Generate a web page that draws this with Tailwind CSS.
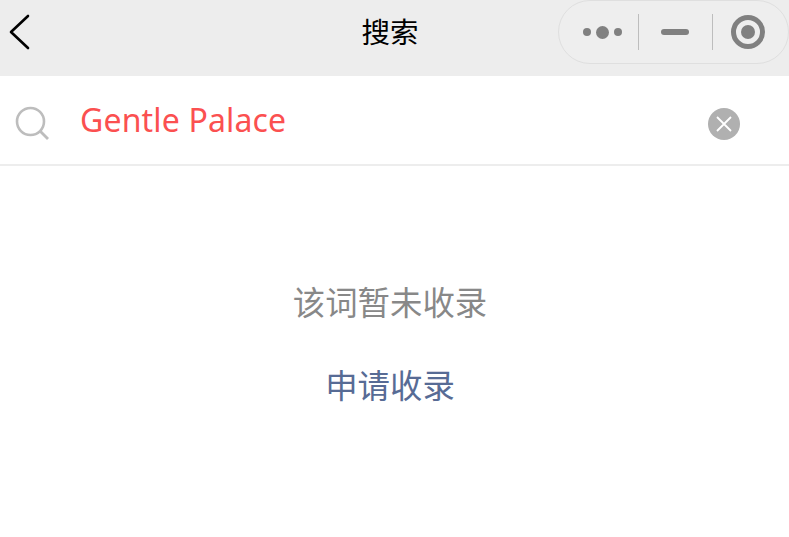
<!DOCTYPE html>
<html lang="zh-CN">
<head>
  <meta charset="UTF-8">
  <title>搜索</title>
  <script src="https://cdn.jsdelivr.net/npm/@tailwindcss/browser@4"></script>
</head>
<body class="h-[537px] overflow-hidden bg-white font-['Noto_Sans','Noto_Sans_CJK_SC',sans-serif]">

  <!-- nav bar -->
  <header class="relative flex h-[76px] items-start justify-between bg-[#ededed]">
    <svg class="ml-[9px] mt-[14px]" width="22" height="36" viewBox="0 0 22 36" fill="none">
      <path d="M19 2 L2 18 L19 34" stroke="#000" stroke-width="2.6" stroke-linecap="round" stroke-linejoin="round"/>
    </svg>
    <h1 class="absolute left-[361.5px] top-[12px] text-[28.5px] leading-[40px] font-normal text-black">搜索</h1>
    <div class="flex h-[64px] w-[231px] items-center rounded-full border border-[#dfdfdf] bg-[#eeeeee]">
      <div class="flex w-[79px] items-center justify-end gap-[5px] pr-[16px]">
        <span class="size-2 rounded-full bg-[#808080]"></span>
        <span class="size-[13px] rounded-full bg-[#808080]"></span>
        <span class="size-2 rounded-full bg-[#808080]"></span>
      </div>
      <div class="h-[36px] w-px bg-[#bdbdbd]"></div>
      <div class="flex w-[73px] items-center justify-center pr-[2px]">
        <span class="h-[6px] w-[28px] rounded-full bg-[#808080]"></span>
      </div>
      <div class="h-[36px] w-px bg-[#bdbdbd]"></div>
      <div class="flex flex-1 items-center pl-[18px]">
        <span class="mb-[1px] flex size-[34px] items-center justify-center rounded-full border-[5px] border-[#808080]">
          <span class="size-[14px] rounded-full bg-[#808080]"></span>
        </span>
      </div>
    </div>
  </header>

  <!-- search row -->
  <div class="flex h-[90px] items-center border-b-2 border-[#ededed]">
    <svg class="ml-[15px] mt-2" width="36" height="36" viewBox="0 0 36 36" fill="none">
      <circle cx="15.5" cy="15.5" r="13.5" stroke="#bdbdbd" stroke-width="2.6"/>
      <path d="M25.5 25.5 L33 33" stroke="#bdbdbd" stroke-width="2.8"/>
    </svg>
    <span class="ml-[29px] text-[32px] leading-[44px] tracking-[0.16px] text-[#fb5050]">Gentle Palace</span>
    <span class="ml-auto mr-[49px] mt-2 flex size-8 items-center justify-center rounded-full bg-[#b0b0b0]">
      <svg width="18" height="18" viewBox="0 0 18 18" fill="none">
        <path d="M2 2 L16 16 M16 2 L2 16" stroke="#fff" stroke-width="1.8"/>
      </svg>
    </span>
  </div>

  <!-- empty result -->
  <main class="flex w-[780px] flex-col items-center pt-[113px]">
    <p class="text-[32.4px] leading-[46px] text-[#888888]">该词暂未收录</p>
    <a class="mt-[37px] text-[32.4px] leading-[46px] text-[#576b95]">申请收录</a>
  </main>

</body>
</html>
